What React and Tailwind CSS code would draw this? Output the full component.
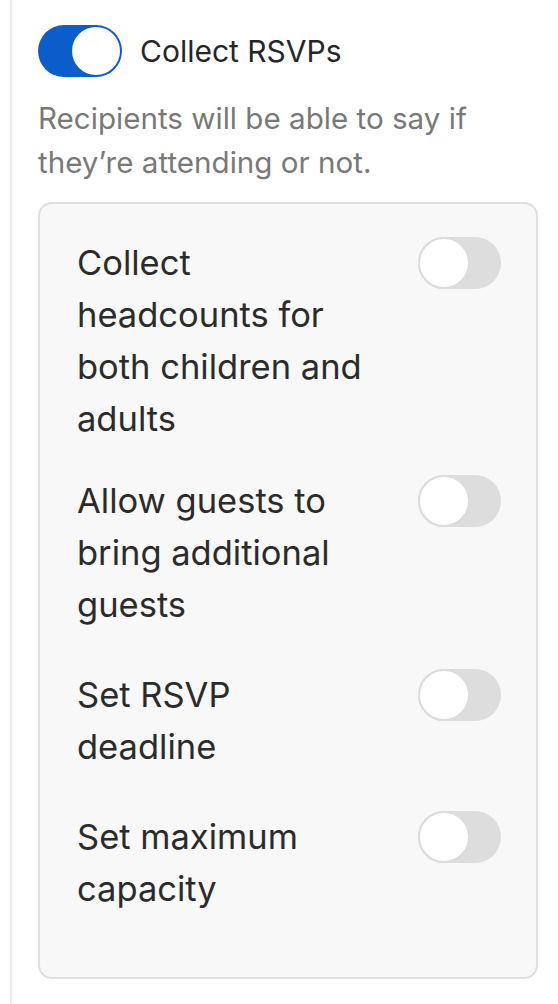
import React from "react";

function Toggle({ on }) {
  if (on) {
    return (
      <div className="flex h-[52px] w-[84px] shrink-0 items-center justify-end rounded-full bg-[#0b5dcc] p-[2px]">
        <div className="h-[48px] w-[48px] rounded-full bg-white" />
      </div>
    );
  }
  return (
    <div className="flex h-[52px] w-[83px] shrink-0 items-center justify-start rounded-full bg-[#dddddd]">
      <div className="h-[52px] w-[52px] rounded-full border-2 border-[#dcdcdc] bg-white" />
    </div>
  );
}

function Row({ label, className }) {
  return (
    <div className={"flex items-start justify-between " + className}>
      <div className="w-[292px] text-[34.5px] leading-[52px] text-[#2b2b2b]">{label}</div>
      <Toggle on={false} />
    </div>
  );
}

export default function App() {
  return (
    <div
      className="min-h-[1004px] w-[558px] bg-white"
      style={{ fontFamily: "Inter, 'Noto Sans', sans-serif" }}
    >
      <div className="ml-[10px] flex min-h-[1004px] flex-col border-l-2 border-[#ececec] pl-[26px] pr-[20px] pt-[25px]">
        <div className="flex items-center gap-[18px]">
          <Toggle on={true} />
          <span className="text-[30px] leading-[40px] text-[#262626]">Collect RSVPs</span>
        </div>
        <p className="mt-[19px] text-[29.6px] leading-[44px] text-[#787878]">
          Recipients will be able to say if they’re attending or not.
        </p>
        <div className="mt-[18px] flex h-[777px] w-[500px] flex-col rounded-[14px] border-2 border-[#dedede] bg-[#f8f8f8] pl-[37px] pr-[35px] pt-[33px]">
          <Row label="Collect headcounts for both children and adults" className="" />
          <Row label="Allow guests to bring additional guests" className="mt-[30px]" />
          <Row label="Set RSVP deadline" className="mt-[38px]" />
          <Row label="Set maximum capacity" className="mt-[38px]" />
        </div>
      </div>
    </div>
  );
}
